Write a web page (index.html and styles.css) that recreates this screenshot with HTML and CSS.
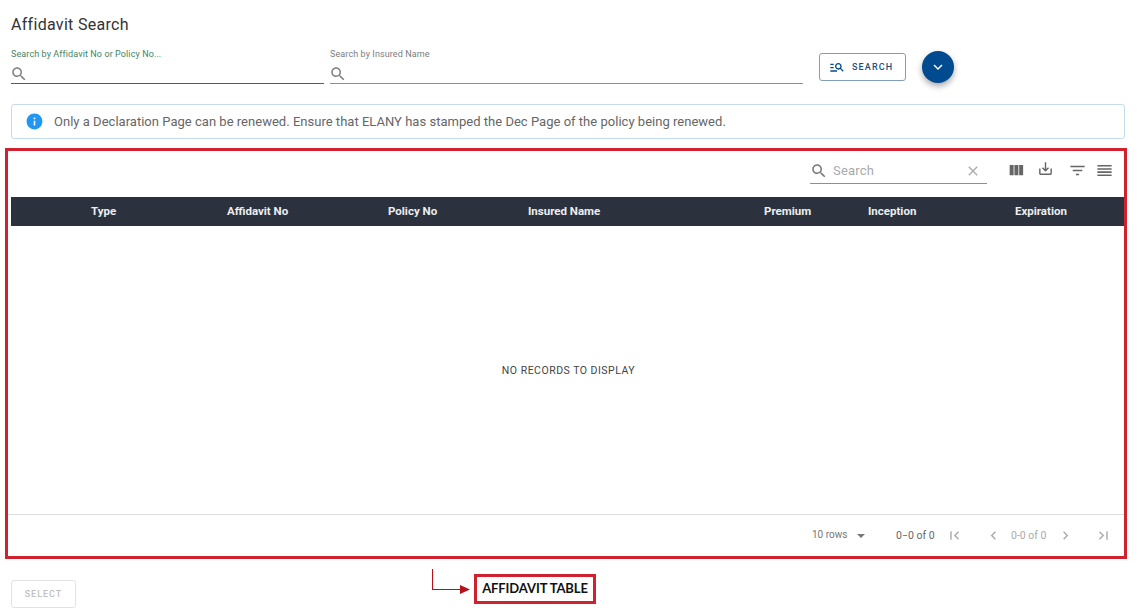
FILE: index.html
```html
<!doctype html>
<html lang="en">
<head>
  <meta charset="utf-8"/>
  <title>Affidavit Search</title>
  <link rel="stylesheet" href="styles.css">
</head>
<body>

  <h1 class="page-title">Affidavit Search</h1>

  <section class="search-row">
    <div class="field field-policy field-active">
      <label class="field-label">Search by Affidavit No or Policy No...</label>
      <div class="field-input">
        <svg class="field-icon" viewBox="0 0 24 24"><path d="M15.5 14h-.79l-.28-.27C15.41 12.59 16 11.11 16 9.5 16 5.91 13.09 3 9.5 3S3 5.91 3 9.5 5.91 16 9.5 16c1.61 0 3.09-.59 4.23-1.57l.27.28v.79l5 4.99L20.49 19l-4.99-5zm-6 0C7.01 14 5 11.99 5 9.5S7.01 5 9.5 5 14 7.01 14 9.5 11.99 14 9.5 14z"/></svg>
      </div>
    </div>
    <div class="field field-name">
      <label class="field-label">Search by Insured Name</label>
      <div class="field-input">
        <svg class="field-icon" viewBox="0 0 24 24"><path d="M15.5 14h-.79l-.28-.27C15.41 12.59 16 11.11 16 9.5 16 5.91 13.09 3 9.5 3S3 5.91 3 9.5 5.91 16 9.5 16c1.61 0 3.09-.59 4.23-1.57l.27.28v.79l5 4.99L20.49 19l-4.99-5zm-6 0C7.01 14 5 11.99 5 9.5S7.01 5 9.5 5 14 7.01 14 9.5 11.99 14 9.5 14z"/></svg>
      </div>
    </div>
    <button class="search-button">
      <svg viewBox="0 0 24 24"><path d="M7 9H2V7h5v2zm0 3H2v2h5v-2zm13.59 7l-3.83-3.83c-.8.52-1.74.83-2.76.83-2.76 0-5-2.24-5-5s2.24-5 5-5 5 2.24 5 5c0 1.02-.31 1.96-.83 2.75L22 17.59 20.59 19zM17 11c0-1.65-1.35-3-3-3s-3 1.35-3 3 1.35 3 3 3 3-1.35 3-3zM2 19h10v-2H2v2z"/></svg>
      SEARCH
    </button>
    <button class="expand-button">
      <svg viewBox="0 0 24 24"><path d="M7.41 8.59 12 13.17l4.59-4.58L18 10l-6 6-6-6z"/></svg>
    </button>
  </section>

  <section class="alert">
    <svg class="alert-icon" viewBox="0 0 24 24"><path d="M12 2C6.48 2 2 6.48 2 12s4.48 10 10 10 10-4.48 10-10S17.52 2 12 2zm1 15h-2v-6h2v6zm0-8h-2V7h2v2z"/></svg>
    <p>Only a Declaration Page can be renewed. Ensure that ELANY has stamped the Dec Page of the policy being renewed.</p>
  </section>

  <main class="table-frame">
    <div class="toolbar">
      <div class="table-search">
        <svg class="table-search-icon" viewBox="0 0 24 24"><path d="M15.5 14h-.79l-.28-.27C15.41 12.59 16 11.11 16 9.5 16 5.91 13.09 3 9.5 3S3 5.91 3 9.5 5.91 16 9.5 16c1.61 0 3.09-.59 4.23-1.57l.27.28v.79l5 4.99L20.49 19l-4.99-5zm-6 0C7.01 14 5 11.99 5 9.5S7.01 5 9.5 5 14 7.01 14 9.5 11.99 14 9.5 14z"/></svg>
        <span class="table-search-text">Search</span>
        <svg class="table-search-clear" viewBox="0 0 24 24"><path d="M19 6.41L17.59 5 12 10.59 6.41 5 5 6.41 10.59 12 5 17.59 6.41 19 12 13.41 17.59 19 19 17.59 13.41 12z"/></svg>
      </div>
      <div class="tools">
        <svg class="tool tool-columns" viewBox="0 0 24 24"><path d="M10 18h5V5h-5v13zm-6 0h5V5H4v13zM16 5v13h5V5h-5z"/></svg>
        <svg class="tool tool-export" viewBox="0 0 24 24"><path d="M19 12v7H5v-7H3v7c0 1.1.9 2 2 2h14c1.1 0 2-.9 2-2v-7h-2zm-6 .67l2.59-2.58L17 11.5l-5 5-5-5 1.41-1.41L11 12.67V3h2z"/></svg>
        <svg class="tool tool-filter" viewBox="0 0 24 24"><path d="M10 18h4v-2h-4v2zM3 6v2h18V6H3zm3 7h12v-2H6v2z"/></svg>
        <svg class="tool tool-density" viewBox="0 0 24 24"><path d="M3 15h18v-2H3v2zm0 4h18v-2H3v2zm0-8h18V9H3v2zm0-6v2h18V5H3z"/></svg>
      </div>
    </div>

    <div class="table-head">
      <span>Type</span>
      <span>Affidavit No</span>
      <span>Policy No</span>
      <span>Insured Name</span>
      <span>Premium</span>
      <span>Inception</span>
      <span>Expiration</span>
    </div>

    <div class="table-empty">NO RECORDS TO DISPLAY</div>

    <div class="pager">
      <span class="pager-rows">10 rows</span>
      <span class="pager-caret"></span>
      <span class="pager-count">0&minus;0 of 0</span>
      <svg class="pager-icon pager-first" viewBox="0 0 24 24"><path d="M18.41 16.59L13.82 12l4.59-4.59L17 6l-6 6 6 6zM6 6h2v12H6z"/></svg>
      <svg class="pager-icon pager-prev" viewBox="0 0 24 24"><path d="M15.41 7.41L14 6l-6 6 6 6 1.41-1.41L10.83 12z"/></svg>
      <span class="pager-range">0-0 of 0</span>
      <svg class="pager-icon pager-next" viewBox="0 0 24 24"><path d="M10 6L8.59 7.41 13.17 12l-4.58 4.59L10 18l6-6z"/></svg>
      <svg class="pager-icon pager-last" viewBox="0 0 24 24"><path d="M5.59 7.41L10.18 12l-4.59 4.59L7 18l6-6-6-6zM16 6h2v12h-2z"/></svg>
    </div>
  </main>

  <footer class="bottom-row">
    <button class="select-button" disabled>SELECT</button>
    <svg class="callout-arrow" viewBox="0 0 38 26">
      <path d="M0.5 0v20.5h28" fill="none" stroke="#b5121b" stroke-width="1.2"/>
      <path d="M28 16l10 4.5-10 4.5z" fill="#b5121b"/>
    </svg>
    <div class="callout-label">AFFIDAVIT TABLE</div>
  </footer>

</body>
</html>
```

FILE: styles.css
```css
:root {
  --navy: #004a8f;
  --red: #d0222e;
  --header-dark: #2b323e;
}
* { margin: 0; padding: 0; box-sizing: border-box; font-family: "Roboto", sans-serif; }
html, body { height: 100%; overflow: hidden; background-color: white; }
body { padding: 15px 15px 0 11px; color: #333; }

.page-title { font-size: 16px; line-height: 19px; font-weight: 400; letter-spacing: 0.3px; color: #333; }

.search-row { display: flex; align-items: flex-start; margin-top: 15px; height: 51px; }
.field { display: flex; flex-direction: column; }
.field-policy { width: 313px; margin-right: 6px; }
.field-name { width: 473px; margin-right: 16px; }
.field-label { font-size: 9px; line-height: 11px; color: #7d7d7d; letter-spacing: 0.1px; }
.field-active .field-label { color: #3f8568; }
.field-input { height: 19px; margin-top: 5px; border-bottom: 1px solid #8f8f8f; }
.field-active .field-input { border-bottom-color: #2f6f66; }
.field-icon { display: block; width: 18px; height: 18px; margin-left: -1px; fill: #808080; }

.search-button {
  display: flex; align-items: center; gap: 7px;
  width: 87px; height: 28px; margin-top: 4px; padding-left: 9px;
  background: white; border: 1px solid #7fa0b8; border-radius: 3px;
  color: #1d4f7c; font-size: 9px; font-weight: 500; letter-spacing: 1.15px;
}
.search-button svg { width: 16px; height: 16px; fill: var(--navy); }

.expand-button {
  display: flex; align-items: center; justify-content: center;
  width: 32px; height: 32px; margin-left: 16px; margin-top: 2px;
  background-color: var(--navy); border: none; border-radius: 50%;
  box-shadow: 0 3px 6px rgba(0, 0, 0, 0.35);
}
.expand-button svg { width: 18px; height: 18px; fill: white; }

.alert {
  display: flex; align-items: center; gap: 10px;
  height: 35px; margin-top: 4px; padding-left: 13px; width: 1114px;
  border: 1px solid #c3dcec; border-radius: 3px;
}
.alert-icon { width: 19px; height: 19px; fill: #2196f3; flex: none; }
.alert p { font-size: 13px; letter-spacing: 0.02px; color: #666; }

.table-frame {
  display: flex; flex-direction: column;
  width: 1122px; height: 411px; margin: 9px 0 0 -6px;
  border: 3px solid var(--red);
}
.toolbar { display: flex; align-items: flex-start; justify-content: flex-end; height: 46px; flex: none; }
.table-search {
  display: flex; align-items: center;
  width: 177px; height: 24px; margin-top: 9px; margin-right: 20px;
  border-bottom: 1px solid #8f8f8f; padding-bottom: 2px;
}
.table-search-icon { width: 18px; height: 18px; fill: #777; flex: none; }
.table-search-text { flex: 1; margin-left: 5px; font-size: 13px; letter-spacing: 0.2px; color: #aaa; }
.table-search-clear { width: 16px; height: 16px; margin-right: 6px; fill: #aaa; }
.tools { display: flex; align-items: flex-start; padding-top: 10px; }
.tool { width: 19px; height: 19px; fill: #666; }
.tool-columns { margin-right: 11px; width: 20px; margin-left: -1px; }
.tool-export { width: 17px; height: 17px; margin-top: -1px; margin-right: 14px; }
.tool-filter { margin-right: 8px; }
.tool-density { margin-right: 10px; }

.table-head {
  display: grid; grid-template-columns: 136px 161px 140px 236px 104px 147px 1fr;
  align-items: center; flex: none;
  height: 29px; margin-left: 3px; padding-left: 80px; padding-bottom: 2px;
  background-color: var(--header-dark); color: #eceef0;
  font-size: 11.5px; font-weight: 700;
}
.table-empty {
  display: flex; align-items: center; justify-content: center; flex: 1;
  padding-left: 5px;
  font-size: 10.5px; letter-spacing: 0.5px; color: #444;
}
.pager {
  display: flex; align-items: center; flex: none;
  height: 42px; padding-left: 804px;
  border-top: 1px solid #dedede; color: #777; font-size: 10px;
}
.pager-rows { width: 36px; margin-top: -2px; }
.pager-caret {
  width: 0; height: 0; margin-left: 9px; margin-right: 31px;
  border-left: 4.5px solid transparent; border-right: 4.5px solid transparent; border-top: 4px solid #777;
}
.pager-count { width: 39px; color: #666; font-size: 10.5px; white-space: nowrap; }
.pager-icon { width: 17px; height: 17px; fill: #aaa; flex: none; }
.pager-first { margin-left: 11px; }
.pager-prev { margin-left: 22px; }
.pager-range { width: 37px; margin-left: 9px; color: #aaa; font-size: 10.5px; white-space: nowrap; }
.pager-next { margin-left: 9px; }
.pager-last { margin-left: 21px; }

.bottom-row { display: flex; align-items: flex-start; margin-top: 10px; }
.select-button {
  width: 65px; height: 28px; margin-top: 11px;
  background: white; border: 1px solid #e2e2e2; border-radius: 3px;
  color: #c0c0c0; font-size: 9px; font-weight: 500; letter-spacing: 1px;
}
.callout-arrow { width: 38px; height: 26px; margin-left: 356px; }
.callout-label {
  width: 122px; height: 30px; margin-left: 4px; margin-top: 5px;
  border: 3px solid var(--red);
  color: #111; font-family: "Lato", sans-serif; font-size: 13px; font-weight: 700; line-height: 23px;
  text-align: center; letter-spacing: -0.1px; white-space: nowrap;
}
```
